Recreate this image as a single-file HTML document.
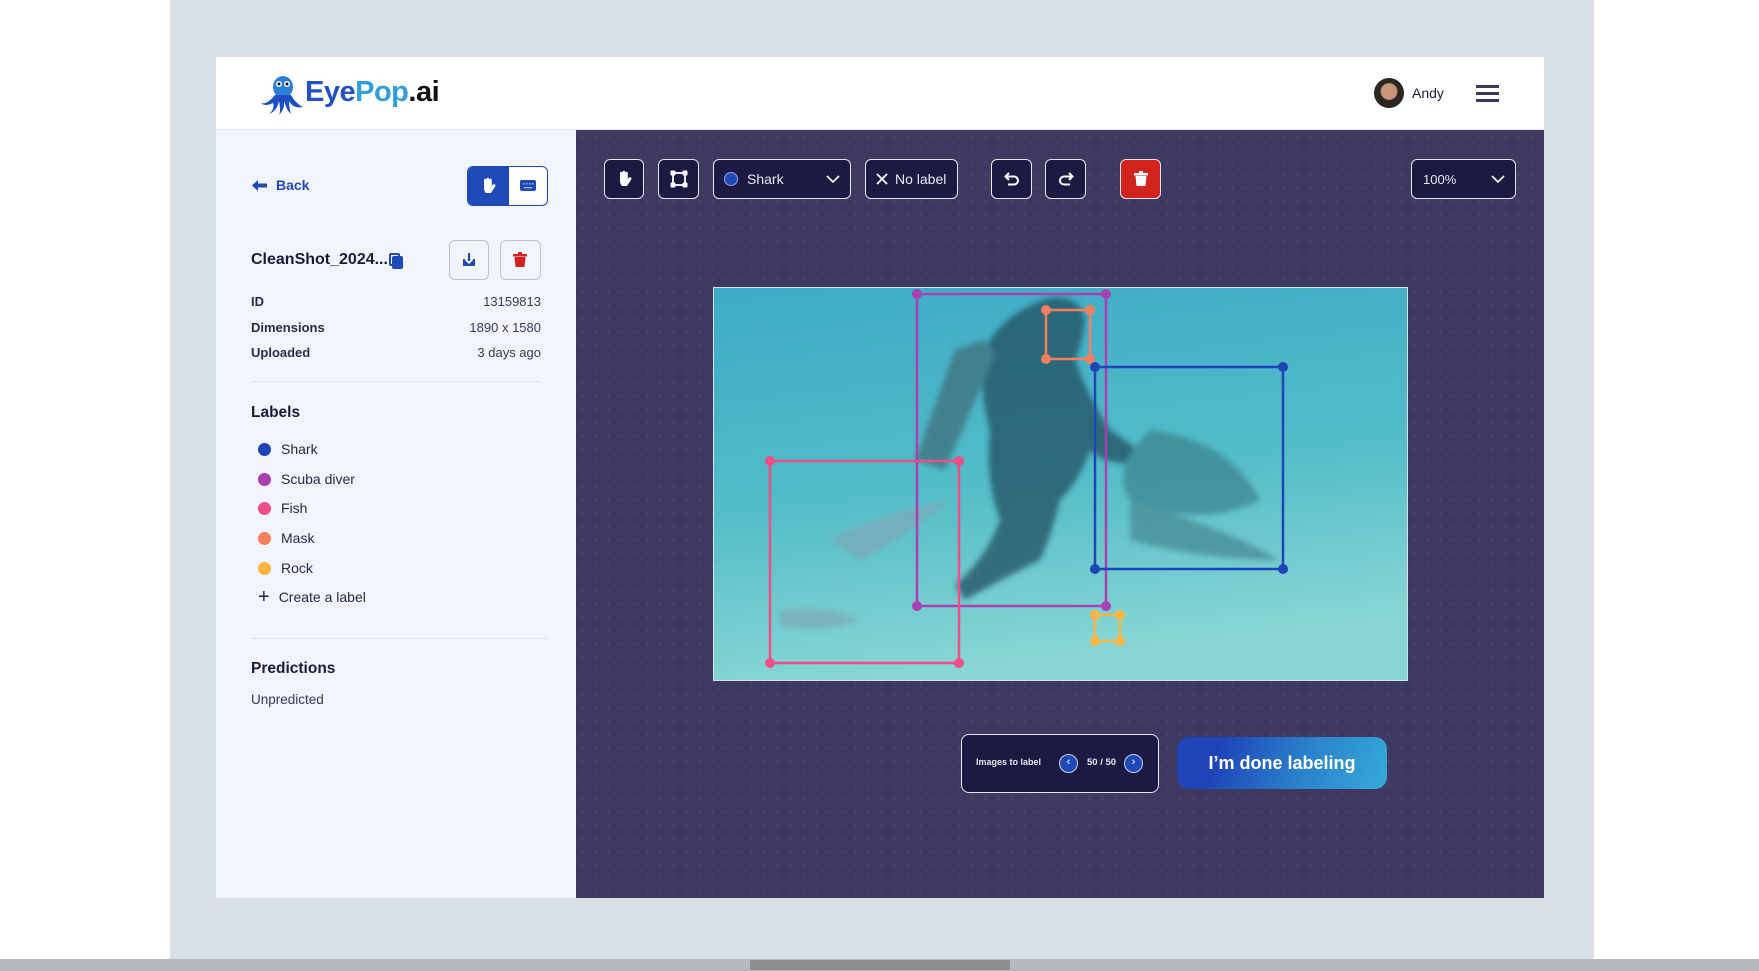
<!DOCTYPE html>
<html><head><meta charset="utf-8"><style>
*{box-sizing:border-box;margin:0;padding:0}
body{width:1759px;height:971px;position:relative;overflow:hidden;background:#fff;font-family:"Liberation Sans",sans-serif}
.abs{position:absolute}
.frame{left:170px;top:0;width:1424px;height:959px;background:#d9e1e7}
.bar{left:0;top:959px;width:1759px;height:12px;background:#b7babd}
.thumb{left:750px;top:960px;width:260px;height:10px;background:#8d8d8f;border-radius:2px}
.header{left:216px;top:57px;width:1328px;height:73px;background:#fff;border-bottom:1px solid #e2e6ee}
.side{left:216px;top:130px;width:360px;height:768px;background:#f1f4fd}
.canvas{left:576px;top:130px;width:968px;height:768px;background-color:#3e3960;background-image:radial-gradient(circle,#4a4670 1.2px,transparent 1.3px);background-size:13px 13px}
.t{color:#1c1a3a}
.btn{position:absolute;top:159px;height:40px;background:#1c1a42;border:1.5px solid #e6e6ee;border-radius:6px;color:#e8e8f0;font-size:14px;display:flex;align-items:center}
.row{position:absolute;left:251px;width:290px;font-size:13px;color:#3a3858;display:flex;justify-content:space-between}
.row b{color:#2c2a48}
.lbl{position:absolute;left:258px;font-size:14px;color:#2a2846;display:flex;align-items:center}
.lbl i{display:inline-block;width:13px;height:13px;border-radius:50%;margin-right:10px}
.div{position:absolute;left:251px;height:1px;background:#dfe3ee}
</style></head><body>
<div class="abs frame"></div>
<div class="abs bar"></div><div class="abs thumb"></div>
<div class="abs header">
 <svg class="abs" style="left:43px;top:14px" width="48" height="44" viewBox="0 0 48 44">
  <g fill="#1e4fc2"><ellipse cx="24" cy="16" rx="10" ry="11" fill="#2a7fd8"/>
  <path d="M16 24 Q8 34 2 32 Q6 36 14 32 Q16 38 10 43 Q18 40 20 30 Q22 40 20 44 Q26 38 25 30 Q28 40 32 43 Q30 36 30 30 Q34 38 44 36 Q36 32 32 24Z"/></g>
  <circle cx="20" cy="13" r="3" fill="#fff"/><circle cx="28" cy="13" r="3" fill="#fff"/>
  <circle cx="20" cy="13" r="1.5" fill="#111"/><circle cx="28" cy="13" r="1.5" fill="#111"/>
 </svg>
 <div class="abs" style="left:89px;top:19px;font-size:29px;font-weight:bold;letter-spacing:-0.5px"><span style="color:#2450c4">Eye</span><span style="color:#2f9fdc">Pop</span><span style="color:#111">.ai</span></div>
 <div class="abs" style="left:1158px;top:21px;width:30px;height:30px;border-radius:50%;background:radial-gradient(circle at 50% 45%,#c99478 0 35%,#2b2622 40%)"></div>
 <div class="abs t" style="left:1196px;top:28px;font-size:14px">Andy</div>
 <div class="abs" style="left:1260px;top:28px;width:23px;height:2.5px;background:#3c3a5c;box-shadow:0 7px 0 #3c3a5c,0 14px 0 #3c3a5c"></div>
</div>
<div class="abs side"></div>
<svg class="abs" style="left:251px;top:179px" width="17" height="13"><path d="M1 6.5 L7 1 V4.5 H16 V8.5 H7 V12Z" fill="#2049b8"/></svg>
<div class="abs" style="left:276px;top:177px;font-size:14px;font-weight:bold;color:#2049b8">Back</div>
<div class="abs" style="left:467px;top:166px;width:81px;height:40px;border:1.5px solid #2049b8;border-radius:6px;background:#fff;overflow:hidden">
 <div style="position:absolute;left:0;top:0;width:41px;height:40px;background:#2049b8"></div>
 <svg style="position:absolute;left:12px;top:10px" width="17" height="18" viewBox="0 0 17 18"><path d="M4 8 V3 a1.3 1.3 0 0 1 2.6 0 V2 a1.3 1.3 0 0 1 2.6 0 V3 a1.3 1.3 0 0 1 2.6 0 V9 L13 7.5 a1.5 1.5 0 0 1 2.2 2 L11 16 H6 Q4 14 4 11Z" fill="#fff"/></svg>
 <svg style="position:absolute;left:52px;top:13px" width="16" height="11"><rect x="0" y="0" width="16" height="11" rx="2" fill="#2049b8"/><g fill="#9fb3ee"><rect x="3" y="3" width="1.5" height="1.5"/><rect x="6" y="3" width="1.5" height="1.5"/><rect x="9" y="3" width="1.5" height="1.5"/><rect x="12" y="3" width="1.5" height="1.5"/><rect x="4" y="7" width="8" height="1.3"/></g></svg>
</div>
<div class="abs t" style="left:251px;top:251px;font-size:16px;font-weight:bold">CleanShot_2024...</div>
<div class="abs" style="left:389px;top:253px;width:11px;height:13px;border:2px solid #2049b8;border-radius:2px"></div>
<div class="abs" style="left:392px;top:256px;width:11px;height:13px;background:#2049b8;border-radius:2px"></div>
<div class="abs" style="left:449px;top:240px;width:40px;height:40px;border:1.5px solid #c0c0d4;border-radius:6px"></div>
<svg class="abs" style="left:460px;top:251px" width="18" height="18"><path d="M3 8 V15 H15 V8" fill="#2049b8"/><path d="M9 2 V11 M5.5 8 L9 11.5 L12.5 8" stroke="#fff" stroke-width="2.2" fill="none"/><path d="M9 2 V10" stroke="#2049b8" stroke-width="2"/></svg>
<div class="abs" style="left:500px;top:240px;width:41px;height:40px;border:1.5px solid #c0c0d4;border-radius:6px"></div>
<svg class="abs" style="left:513px;top:252px" width="14" height="16"><rect x="0" y="2" width="14" height="2.5" fill="#d0231f"/><rect x="5" y="0" width="4" height="3" fill="#d0231f"/><path d="M1.5 5 H12.5 L11.5 15 H2.5Z" fill="#d0231f"/></svg>
<div class="row" style="top:294px"><b>ID</b><span>13159813</span></div>
<div class="row" style="top:320px"><b>Dimensions</b><span>1890 x 1580</span></div>
<div class="row" style="top:345px"><b>Uploaded</b><span>3 days ago</span></div>
<div class="div" style="top:381px;width:290px"></div>
<div class="abs t" style="left:251px;top:404px;font-size:15.5px;font-weight:bold">Labels</div>
<div class="lbl" style="top:441px"><i style="background:#1e44b8"></i>Shark</div>
<div class="lbl" style="top:471px"><i style="background:#a83fb0"></i>Scuba diver</div>
<div class="lbl" style="top:500px"><i style="background:#ef4f86"></i>Fish</div>
<div class="lbl" style="top:530px"><i style="background:#f67f5f"></i>Mask</div>
<div class="lbl" style="top:560px"><i style="background:#fbb542"></i>Rock</div>
<div class="lbl" style="top:589px"><span style="font-size:20px;margin-right:9px;line-height:16px">+</span>Create a label</div>
<div class="div" style="top:638px;width:296px"></div>
<div class="abs t" style="left:251px;top:660px;font-size:15.5px;font-weight:bold">Predictions</div>
<div class="abs" style="left:251px;top:692px;font-size:13.5px;color:#3a3858">Unpredicted</div>

<div class="abs canvas"></div>
<div class="btn" style="left:604px;width:40px;justify-content:center"><svg width="17" height="18" viewBox="0 0 17 18"><path d="M4 8 V3 a1.3 1.3 0 0 1 2.6 0 V2 a1.3 1.3 0 0 1 2.6 0 V3 a1.3 1.3 0 0 1 2.6 0 V9 L13 7.5 a1.5 1.5 0 0 1 2.2 2 L11 16 H6 Q4 14 4 11Z" fill="#fff"/></svg></div>
<div class="btn" style="left:658px;width:41px;justify-content:center"><svg width="18" height="18"><rect x="3" y="3" width="12" height="12" fill="none" stroke="#fff" stroke-width="1.8"/><g fill="#fff"><rect x="0.5" y="0.5" width="5" height="5" rx="1"/><rect x="12.5" y="0.5" width="5" height="5" rx="1"/><rect x="0.5" y="12.5" width="5" height="5" rx="1"/><rect x="12.5" y="12.5" width="5" height="5" rx="1"/></g></svg></div>
<div class="btn" style="left:713px;width:138px;padding-left:10px"><span style="width:14px;height:14px;border-radius:50%;background:#2049b8;border:1px solid #8fa0e0;margin-right:9px"></span>Shark<svg style="margin-left:auto;margin-right:10px" width="14" height="8"><path d="M1 1 L7 7 L13 1" stroke="#fff" stroke-width="1.6" fill="none"/></svg></div>
<div class="btn" style="left:865px;width:93px;padding-left:10px"><svg width="12" height="12" style="margin-right:7px"><path d="M1 1 L11 11 M11 1 L1 11" stroke="#fff" stroke-width="1.8"/></svg>No label</div>
<div class="btn" style="left:991px;width:41px;justify-content:center"><svg width="16" height="14"><path d="M5 1 L1.5 4.5 L5 8" stroke="#fff" stroke-width="2" fill="none"/><path d="M2 4.5 H10 a4 4 0 0 1 0 8 H4" stroke="#fff" stroke-width="2" fill="none"/></svg></div>
<div class="btn" style="left:1045px;width:41px;justify-content:center"><svg width="16" height="14"><path d="M11 1 L14.5 4.5 L11 8" stroke="#fff" stroke-width="2" fill="none"/><path d="M14 4.5 H6 a4 4 0 0 0 0 8 H12" stroke="#fff" stroke-width="2" fill="none"/></svg></div>
<div class="btn" style="left:1120px;width:41px;justify-content:center;background:#d2231f"><svg width="14" height="16"><rect x="0" y="2" width="14" height="2.5" fill="#fff"/><rect x="5" y="0" width="4" height="3" fill="#fff"/><path d="M1.5 5 H12.5 L11.5 15 H2.5Z" fill="#fff"/></svg></div>
<div class="btn" style="left:1411px;width:105px;padding-left:11px;font-size:13px">100%<svg style="margin-left:auto;margin-right:10px" width="14" height="8"><path d="M1 1 L7 7 L13 1" stroke="#fff" stroke-width="1.6" fill="none"/></svg></div>

<svg class="abs" style="left:713px;top:287px" width="695" height="394" viewBox="713 287 695 394">
 <defs>
  <linearGradient id="w" x1="0" y1="0" x2="0.2" y2="1"><stop offset="0" stop-color="#3eaac6"/><stop offset="0.55" stop-color="#52bcc8"/><stop offset="1" stop-color="#88d6d4"/></linearGradient>
  <filter id="b"><feGaussianBlur stdDeviation="3"/></filter>
 </defs>
 <rect x="713" y="287" width="695" height="394" fill="url(#w)" stroke="#d8e0ea" stroke-width="2"/>
 <g filter="url(#b)" opacity="0.75">
  <path d="M1050 298 Q1080 295 1085 320 Q1082 345 1075 360 Q1090 400 1110 430 Q1140 450 1150 460 Q1110 470 1090 450 Q1080 480 1060 500 Q1050 540 1040 560 Q1000 580 965 600 L955 585 Q985 560 1000 520 Q985 480 990 430 Q975 380 990 340 Q1010 310 1050 298Z" fill="#244f5e"/>
  <path d="M955 350 L985 340 L995 355 L945 470 L915 460Z" fill="#41707a"/>
  <path d="M1150 430 Q1230 440 1260 500 Q1200 530 1130 500 Q1110 470 1150 430Z" fill="#3d8590"/>
  <path d="M1130 500 Q1230 530 1280 560 Q1200 560 1130 540Z" fill="#4a8a94"/>
  <path d="M830 540 Q890 510 950 500 Q900 540 860 560Z" fill="#7da9b6"/>
  <path d="M780 610 Q830 605 860 620 Q820 635 780 625Z" fill="#7eaab6"/>
 </g>
 <g fill="none" stroke-width="2.5">
  <rect x="917" y="294" width="189" height="312" stroke="#aa3fb2"/>
  <rect x="1046" y="310" width="44" height="49" stroke="#f67f5f"/>
  <rect x="1095" y="367" width="188" height="202" stroke="#1e44b8"/>
  <rect x="770" y="461" width="189" height="202" stroke="#ef4f86"/>
  <rect x="1095" y="615" width="25" height="26" stroke="#fbb542"/>
 </g>
 <g fill="#aa3fb2"><circle cx="917" cy="294" r="5"/><circle cx="1106" cy="294" r="5"/><circle cx="917" cy="606" r="5"/><circle cx="1106" cy="606" r="5"/></g>
 <g fill="#f67f5f"><circle cx="1046" cy="310" r="5"/><circle cx="1090" cy="310" r="5"/><circle cx="1046" cy="359" r="5"/><circle cx="1090" cy="359" r="5"/></g>
 <g fill="#1e44b8"><circle cx="1095" cy="367" r="5"/><circle cx="1283" cy="367" r="5"/><circle cx="1095" cy="569" r="5"/><circle cx="1283" cy="569" r="5"/></g>
 <g fill="#ef4f86"><circle cx="770" cy="461" r="5"/><circle cx="959" cy="461" r="5"/><circle cx="770" cy="663" r="5"/><circle cx="959" cy="663" r="5"/></g>
 <g fill="#fbb542"><circle cx="1095" cy="615" r="5"/><circle cx="1120" cy="615" r="5"/><circle cx="1095" cy="641" r="5"/><circle cx="1120" cy="641" r="5"/></g>
</svg>

<div class="abs" style="left:961px;top:734px;width:198px;height:59px;background:#1c1a42;border:1.5px solid #e6e6ee;border-radius:8px"></div>
<div class="abs" style="left:976px;top:757px;font-size:9px;font-weight:bold;color:#e8e8f0">Images to label</div>
<div class="abs" style="left:1059px;top:754px;width:19px;height:19px;border-radius:50%;background:#2049b8;border:1.5px solid #c8d0f0;color:#fff;font-size:11px;text-align:center;line-height:15px">‹</div>
<div class="abs" style="left:1087px;top:757px;font-size:9.5px;font-weight:bold;color:#e8e8f0">50 / 50</div>
<div class="abs" style="left:1124px;top:754px;width:19px;height:19px;border-radius:50%;background:#2049b8;border:1.5px solid #c8d0f0;color:#fff;font-size:11px;text-align:center;line-height:15px">›</div>
<div class="abs" style="left:1177px;top:737px;width:210px;height:52px;border-radius:12px;background:linear-gradient(110deg,#1e44b8 20%,#2b82cc 60%,#34aad8);color:#fff;font-size:18px;font-weight:bold;text-align:center;line-height:52px">I’m done labeling</div>
</body></html>
